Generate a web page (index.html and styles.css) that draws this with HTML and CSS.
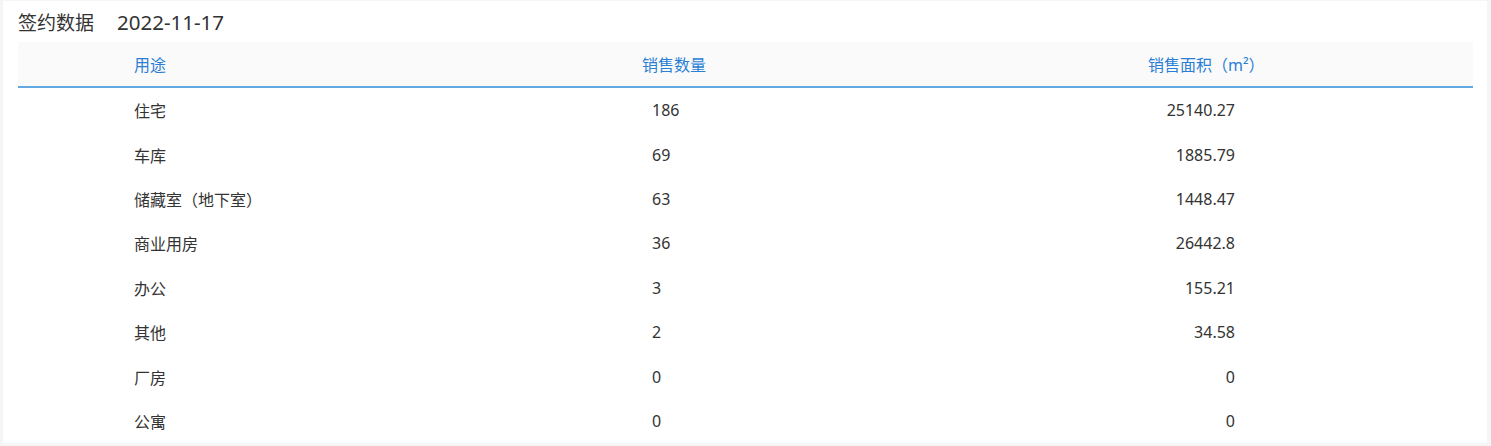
FILE: index.html
```html
<!DOCTYPE html>
<html>
<head>
	<meta charset="utf-8">
	<title>签约数据</title>
	<link rel="stylesheet" href="styles.css">
</head>
<body>
	<div class="card">
		<div class="card-title">
			<span class="name">签约数据</span>
			<span class="date">2022-11-17</span>
		</div>
		<table class="sales">
			<thead>
				<tr>
					<th class="col-use">用途</th>
					<th class="col-count">销售数量</th>
					<th class="col-area">销售面积（m²）</th>
				</tr>
			</thead>
			<tbody>
				<tr><td class="col-use">住宅</td><td class="col-count">186</td><td class="col-area">25140.27</td></tr>
				<tr><td class="col-use">车库</td><td class="col-count">69</td><td class="col-area">1885.79</td></tr>
				<tr><td class="col-use">储藏室（地下室）</td><td class="col-count">63</td><td class="col-area">1448.47</td></tr>
				<tr><td class="col-use">商业用房</td><td class="col-count">36</td><td class="col-area">26442.8</td></tr>
				<tr><td class="col-use">办公</td><td class="col-count">3</td><td class="col-area">155.21</td></tr>
				<tr><td class="col-use">其他</td><td class="col-count">2</td><td class="col-area">34.58</td></tr>
				<tr><td class="col-use">厂房</td><td class="col-count">0</td><td class="col-area">0</td></tr>
				<tr><td class="col-use">公寓</td><td class="col-count">0</td><td class="col-area">0</td></tr>
			</tbody>
		</table>
	</div>
</body>
</html>
```

FILE: styles.css
```css
html {
	background: #f4f5f7;
}

body {
	margin: 0;
	padding: 1px 4px 0 3px;
	font-family: "Noto Sans", "Noto Sans CJK SC", sans-serif;
	color: #333;
}

.card {
	background: #fff;
	padding: 0 14px 0 15px;
	height: 442px;
	box-sizing: border-box;
}

.card-title {
	display: flex;
	align-items: center;
	gap: 23px;
	height: 41px;
	font-size: 19px;
	color: #333;
}

.card-title .date {
	font-size: 20.5px;
}

.sales {
	width: 100%;
	border-collapse: collapse;
	table-layout: fixed;
	font-size: 16px;
}

.sales th {
	height: 44px;
	padding: 0;
	background: #fafafa;
	border-bottom: 2px solid #64a8e2;
	color: #2a7fd5;
	font-weight: normal;
	text-align: left;
}

.sales td {
	height: 44.4px;
	padding: 0;
	text-align: left;
	color: #333;
}

.sales .col-use {
	padding-left: 116px;
}

.sales th.col-count {
	padding-left: 139px;
}

.sales td.col-count {
	padding-left: 149px;
}

.sales th.col-area {
	padding-left: 160px;
}

.sales td.col-area {
	text-align: right;
	padding-right: 238px;
}
```
